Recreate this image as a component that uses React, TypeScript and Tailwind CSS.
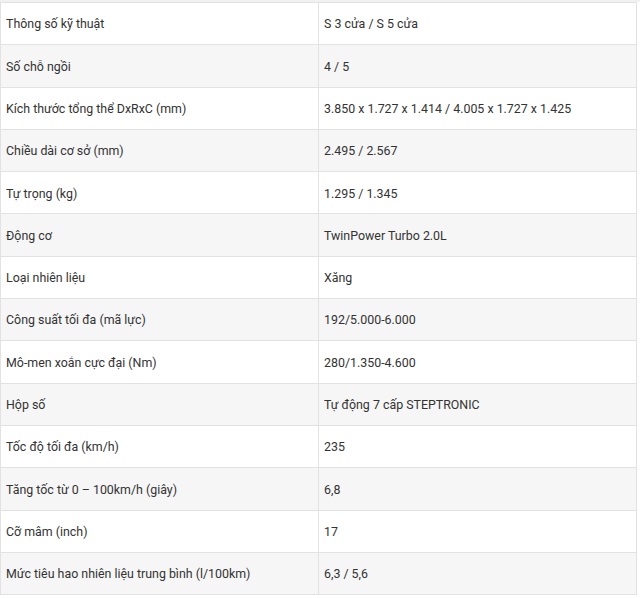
import React from "react";

const rows: [string, string][] = [
  ["Thông số kỹ thuật", "S 3 cửa / S 5 cửa"],
  ["Số chỗ ngồi", "4 / 5"],
  ["Kích thước tổng thể DxRxC (mm)", "3.850 x 1.727 x 1.414 / 4.005 x 1.727 x 1.425"],
  ["Chiều dài cơ sở (mm)", "2.495 / 2.567"],
  ["Tự trọng (kg)", "1.295 / 1.345"],
  ["Động cơ", "TwinPower Turbo 2.0L"],
  ["Loại nhiên liệu", "Xăng"],
  ["Công suất tối đa (mã lực)", "192/5.000-6.000"],
  ["Mô-men xoắn cực đại (Nm)", "280/1.350-4.600"],
  ["Hộp số", "Tự động 7 cấp STEPTRONIC"],
  ["Tốc độ tối đa (km/h)", "235"],
  ["Tăng tốc từ 0 – 100km/h (giây)", "6,8"],
  ["Cỡ mâm (inch)", "17"],
  ["Mức tiêu hao nhiên liệu trung bình (l/100km)", "6,3 / 5,6"],
];

export default function App() {
  return (
    <div className="w-[640px] h-[598px] bg-white overflow-hidden" style={{ fontFamily: "Roboto, 'Noto Sans', sans-serif" }}>
      <div className="h-[2px] bg-[#f1f1f1]" />
      <div className="w-[637px] border-t border-l border-r border-[#e2e2e2] text-[12.4px] text-[#333333]">
        {rows.map(([a, b], i) => (
          <div
            key={i}
            className={`flex h-[42.3px] border-b border-[#e2e2e2] ${i % 2 === 1 ? "bg-[#f6f6f6]" : "bg-white"}`}
          >
            <div className="w-[318px] flex items-center pl-[5px] pt-[2px] border-r border-[#e2e2e2]">{a}</div>
            <div className="flex-1 flex items-center pl-[5px] pt-[2px]">{b}</div>
          </div>
        ))}
      </div>
    </div>
  );
}
